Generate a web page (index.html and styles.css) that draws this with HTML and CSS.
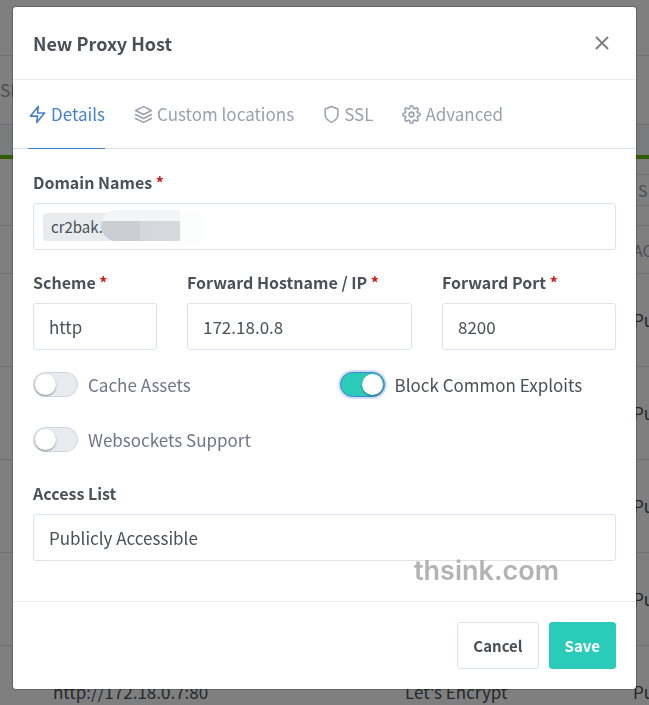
FILE: index.html
```html
<!DOCTYPE html>
<html lang="en">
<head>
<meta charset="utf-8">
<meta name="viewport" content="width=device-width, initial-scale=1">
<title>New Proxy Host</title>
<link rel="stylesheet" href="styles.css">
</head>
<body>
<div class="page" aria-hidden="true">
  <div class="topbar"></div>
  <div class="menu"><span>SL</span></div>
  <div class="spacer"></div>
  <div class="card">
    <div class="card-head"><span class="search">S</span></div>
    <table class="hosts">
      <colgroup><col class="col-dest"><col class="col-ssl"><col></colgroup>
      <thead><tr><th></th><th></th><th>AC</th></tr></thead>
      <tbody>
        <tr><td></td><td></td><td>Pu</td></tr>
        <tr><td></td><td></td><td>Pu</td></tr>
        <tr><td></td><td></td><td>Pu</td></tr>
        <tr><td></td><td></td><td>Pu</td></tr>
        <tr><td>http://172.18.0.7:80</td><td>Let's Encrypt</td><td>Pu</td></tr>
      </tbody>
    </table>
  </div>
</div>

<div class="backdrop">
  <form class="modal" role="dialog" aria-labelledby="title">
    <header class="modal-head">
      <h1 id="title">New Proxy Host</h1>
      <button type="button" class="close" aria-label="Close">
        <svg viewBox="0 0 14 14"><path d="M1 1l12 12M13 1l-12 12"/></svg>
      </button>
    </header>
    <nav class="tabs">
      <a href="#details" class="tab active">
        <svg class="icon" viewBox="0 0 24 24"><path d="M13 2L3 14h9l-1 8 10-12h-9l1-8z"/></svg>Details</a>
      <a href="#locations" class="tab">
        <svg class="icon" viewBox="0 0 24 24"><path d="M12 2L2 7l10 5 10-5-10-5zM2 17l10 5 10-5M2 12l10 5 10-5"/></svg>Custom locations</a>
      <a href="#ssl" class="tab">
        <svg class="icon icon-shield" viewBox="3 0 18 24"><path d="M12 22s8-4 8-10V5l-8-3-8 3v7c0 6 8 10 8 10z"/></svg>SSL</a>
      <a href="#advanced" class="tab">
        <svg class="icon" viewBox="0 0 24 24"><circle cx="12" cy="12" r="3"/><path d="M19.4 15a1.65 1.65 0 0 0 .33 1.82l.06.06a2 2 0 0 1 0 2.83 2 2 0 0 1-2.83 0l-.06-.06a1.65 1.65 0 0 0-1.82-.33 1.65 1.65 0 0 0-1 1.51V21a2 2 0 0 1-2 2 2 2 0 0 1-2-2v-.09A1.65 1.65 0 0 0 9 19.4a1.65 1.65 0 0 0-1.82.33l-.06.06a2 2 0 0 1-2.83 0 2 2 0 0 1 0-2.83l.06-.06a1.65 1.65 0 0 0 .33-1.82 1.65 1.65 0 0 0-1.51-1H3a2 2 0 0 1-2-2 2 2 0 0 1 2-2h.09A1.65 1.65 0 0 0 4.6 9a1.65 1.65 0 0 0-.33-1.82l-.06-.06a2 2 0 0 1 0-2.83 2 2 0 0 1 2.83 0l.06.06a1.65 1.65 0 0 0 1.82.33H9a1.65 1.65 0 0 0 1-1.51V3a2 2 0 0 1 2-2 2 2 0 0 1 2 2v.09a1.65 1.65 0 0 0 1 1.51 1.65 1.65 0 0 0 1.82-.33l.06-.06a2 2 0 0 1 2.83 0 2 2 0 0 1 0 2.83l-.06.06a1.65 1.65 0 0 0-.33 1.82V9a1.65 1.65 0 0 0 1.51 1H21a2 2 0 0 1 2 2 2 2 0 0 1-2 2h-.09a1.65 1.65 0 0 0-1.51 1z"/></svg>Advanced</a>
    </nav>

    <div class="modal-body" id="details">
      <div class="field">
        <label for="domains">Domain Names <span class="req">*</span></label>
        <div class="control tags">
          <span class="tag">cr2bak.<span class="mask"></span></span>
          <input id="domains" type="text">
        </div>
      </div>
      <div class="row">
        <div class="field">
          <label for="scheme">Scheme <span class="req">*</span></label>
          <select class="control" id="scheme"><option>http</option></select>
        </div>
        <div class="field">
          <label for="host">Forward Hostname / IP <span class="req">*</span></label>
          <input class="control" id="host" type="text" value="172.18.0.8">
        </div>
        <div class="field">
          <label for="port">Forward Port <span class="req">*</span></label>
          <input class="control" id="port" type="text" value="8200">
        </div>
      </div>
      <div class="switches">
        <label class="switch"><input type="checkbox"><span>Cache Assets</span></label>
        <label class="switch"><input type="checkbox" class="focused" checked><span>Block Common Exploits</span></label>
        <label class="switch"><input type="checkbox"><span>Websockets Support</span></label>
      </div>
      <div class="field">
        <label for="access">Access List</label>
        <select class="control" id="access"><option>Publicly Accessible</option></select>
      </div>
      <span class="watermark">thsink.com</span>
    </div>

    <footer class="modal-foot">
      <button type="button" class="btn">Cancel</button>
      <button type="button" class="btn primary">Save</button>
    </footer>
  </form>
</div>
</body>
</html>
```

FILE: styles.css
```css
* { box-sizing: border-box; }

body {
  margin: 0;
  height: 100vh;
  overflow: hidden;
  background: #f5f7fb;
  color: #495057;
  font-family: "Noto Sans CJK SC", "Noto Sans", sans-serif;
  font-size: 17px;
  line-height: 24px;
}

/* Host list behind the dialog */
.page { overflow: hidden; }
.topbar { height: 56px; background: #fff; border-bottom: 1px solid #dfe1e5; }
.menu {
  display: flex;
  align-items: center;
  height: 69px;
  background: #fff;
  border-bottom: 1px solid #dfe1e5;
  color: #9aa0ac;
}
.spacer { height: 30px; }
.card { background: #fff; border-top: 4px solid #5eba00; }
.card-head {
  display: flex;
  align-items: center;
  justify-content: flex-end;
  height: 67px;
  padding-bottom: 4px;
  border-bottom: 1px solid #dfe1e5;
}
.search {
  flex: none;
  width: 30px;
  height: 32px;
  padding-left: 19px;
  border: solid #dfe1e5;
  border-width: 1px 0;
  color: #9aa0ac;
  font-size: 16px;
  line-height: 30px;
}
.hosts {
  width: 800px;
  table-layout: fixed;
  border-collapse: separate;
  border-spacing: 0;
}
.col-dest { width: 405px; }
.col-ssl { width: 228px; }
.hosts th, .hosts td {
  padding: 0;
  border-bottom: 1px solid #dfe1e5;
  text-align: left;
  font-weight: 400;
}
.hosts th { height: 48px; color: #9aa0ac; font-size: 16px; }
.hosts td { height: 93px; }
.hosts td:first-child { padding-left: 53px; }

/* Dialog */
.backdrop {
  position: fixed;
  inset: 0;
  padding: 7px 13px;
  background: rgba(0, 0, 0, .5);
}
.modal {
  background: #fff;
  border-radius: 3px;
  box-shadow: 0 0 0 1px rgba(0, 0, 0, .2);
}
.modal-head {
  display: flex;
  align-items: center;
  justify-content: space-between;
  padding: 22px 20px;
  border-bottom: 1px solid #e9ecef;
}
h1 { margin: 0; font-size: 18px; line-height: 24px; font-weight: 700; }
.close {
  display: flex;
  padding: 7px;
  border: 0;
  background: none;
}
.close svg { width: 14px; height: 14px; fill: none; stroke: #7f7f7f; stroke-width: 2; }

.tabs {
  display: flex;
  gap: 29px;
  padding: 0 15px;
  border-bottom: 1px solid #dee2e6;
}
.tab {
  display: flex;
  align-items: center;
  gap: 4px;
  height: 69px;
  margin-bottom: -1px;
  border-bottom: 1px solid transparent;
  color: #9aa0ac;
  text-decoration: none;
  white-space: nowrap;
}
.tab.active { color: #467fcf; border-color: #467fcf; }
.icon {
  width: 19px;
  height: 19px;
  fill: none;
  stroke: currentColor;
  stroke-width: 2;
  stroke-linecap: round;
  stroke-linejoin: round;
}
.icon-shield { width: 17px; }

.modal-body { position: relative; padding: 21px 20px 40px; }
.field > label {
  display: block;
  margin-bottom: 9px;
  font-size: 16px;
  line-height: 24px;
  font-weight: 700;
  white-space: nowrap;
}
.req { color: #cd201f; }
.control {
  display: block;
  width: 100%;
  height: 47px;
  margin: 0;
  padding: 0 15px;
  border: 1px solid #dee2ec;
  border-radius: 3px;
  background: #fff;
  color: #495057;
  font: inherit;
  appearance: none;
}
.tags { display: flex; align-items: center; padding: 0 9px; }
.tags input {
  flex: 1;
  min-width: 0;
  border: 0;
  background: none;
  outline: 0;
  font: inherit;
}
.tag {
  position: relative;
  width: 137px;
  height: 28px;
  padding-left: 8px;
  border-radius: 3px;
  background: #e9ecef;
  font-size: 15px;
  line-height: 28px;
}
.mask {
  position: absolute;
  top: -3px;
  right: 0;
  width: 79px;
  height: 31px;
  border-radius: 18px 0 0 18px;
  background: linear-gradient(#f4f5f7 11px, transparent 11px),
    linear-gradient(90deg, #cbced2 39px, #d3d6da 39px, #d7dadd);
}
.mask::after {
  content: "";
  position: absolute;
  left: 100%;
  top: 2px;
  width: 25px;
  height: 32px;
  border-radius: 0 12px 12px 0;
  background: #fcfdfd;
}
.row {
  display: grid;
  grid-template-columns: 124fr 225fr 174fr;
  gap: 30px;
  margin-top: 20px;
}
.switches {
  display: grid;
  grid-template-columns: 1fr 1fr;
  gap: 30px;
  margin: 22px 0 29px;
}
.switch {
  display: flex;
  align-items: center;
  gap: 10px;
  height: 25px;
  color: #6e7687;
  white-space: nowrap;
}
.switch:has(:checked) { color: #495057; }
.switch input {
  display: flex;
  width: 45px;
  height: 25px;
  margin: 0;
  padding: 1px;
  border: 1px solid #ced4de;
  border-radius: 13px;
  background: #e9ecef;
  appearance: none;
}
.switch input::before {
  content: "";
  width: 21px;
  height: 21px;
  border-radius: 50%;
  background: #fff;
  box-shadow: 0 1px 2px rgba(0, 0, 0, .4);
}
.switch input:checked { justify-content: flex-end; background: #2bcbba; }
.switch .focused { border-color: #467fcf; box-shadow: 0 0 0 2px rgba(70, 127, 207, .25); }

.watermark {
  position: absolute;
  right: 77px;
  bottom: 14px;
  color: #b3b3b3;
  font-family: Inter, sans-serif;
  font-size: 27px;
  line-height: 32px;
  font-weight: 600;
}

.modal-foot {
  display: flex;
  justify-content: flex-end;
  gap: 10px;
  padding: 20px;
  border-top: 1px solid #e9ecef;
}
.btn {
  height: 47px;
  padding: 0 15px;
  border: 1px solid #dee2ec;
  border-radius: 3px;
  background: #fff;
  color: #495057;
  font: inherit;
  font-size: 15px;
  font-weight: 700;
}
.btn.primary { border-color: #2bcbba; background: #2bcbba; color: #fff; }
```
